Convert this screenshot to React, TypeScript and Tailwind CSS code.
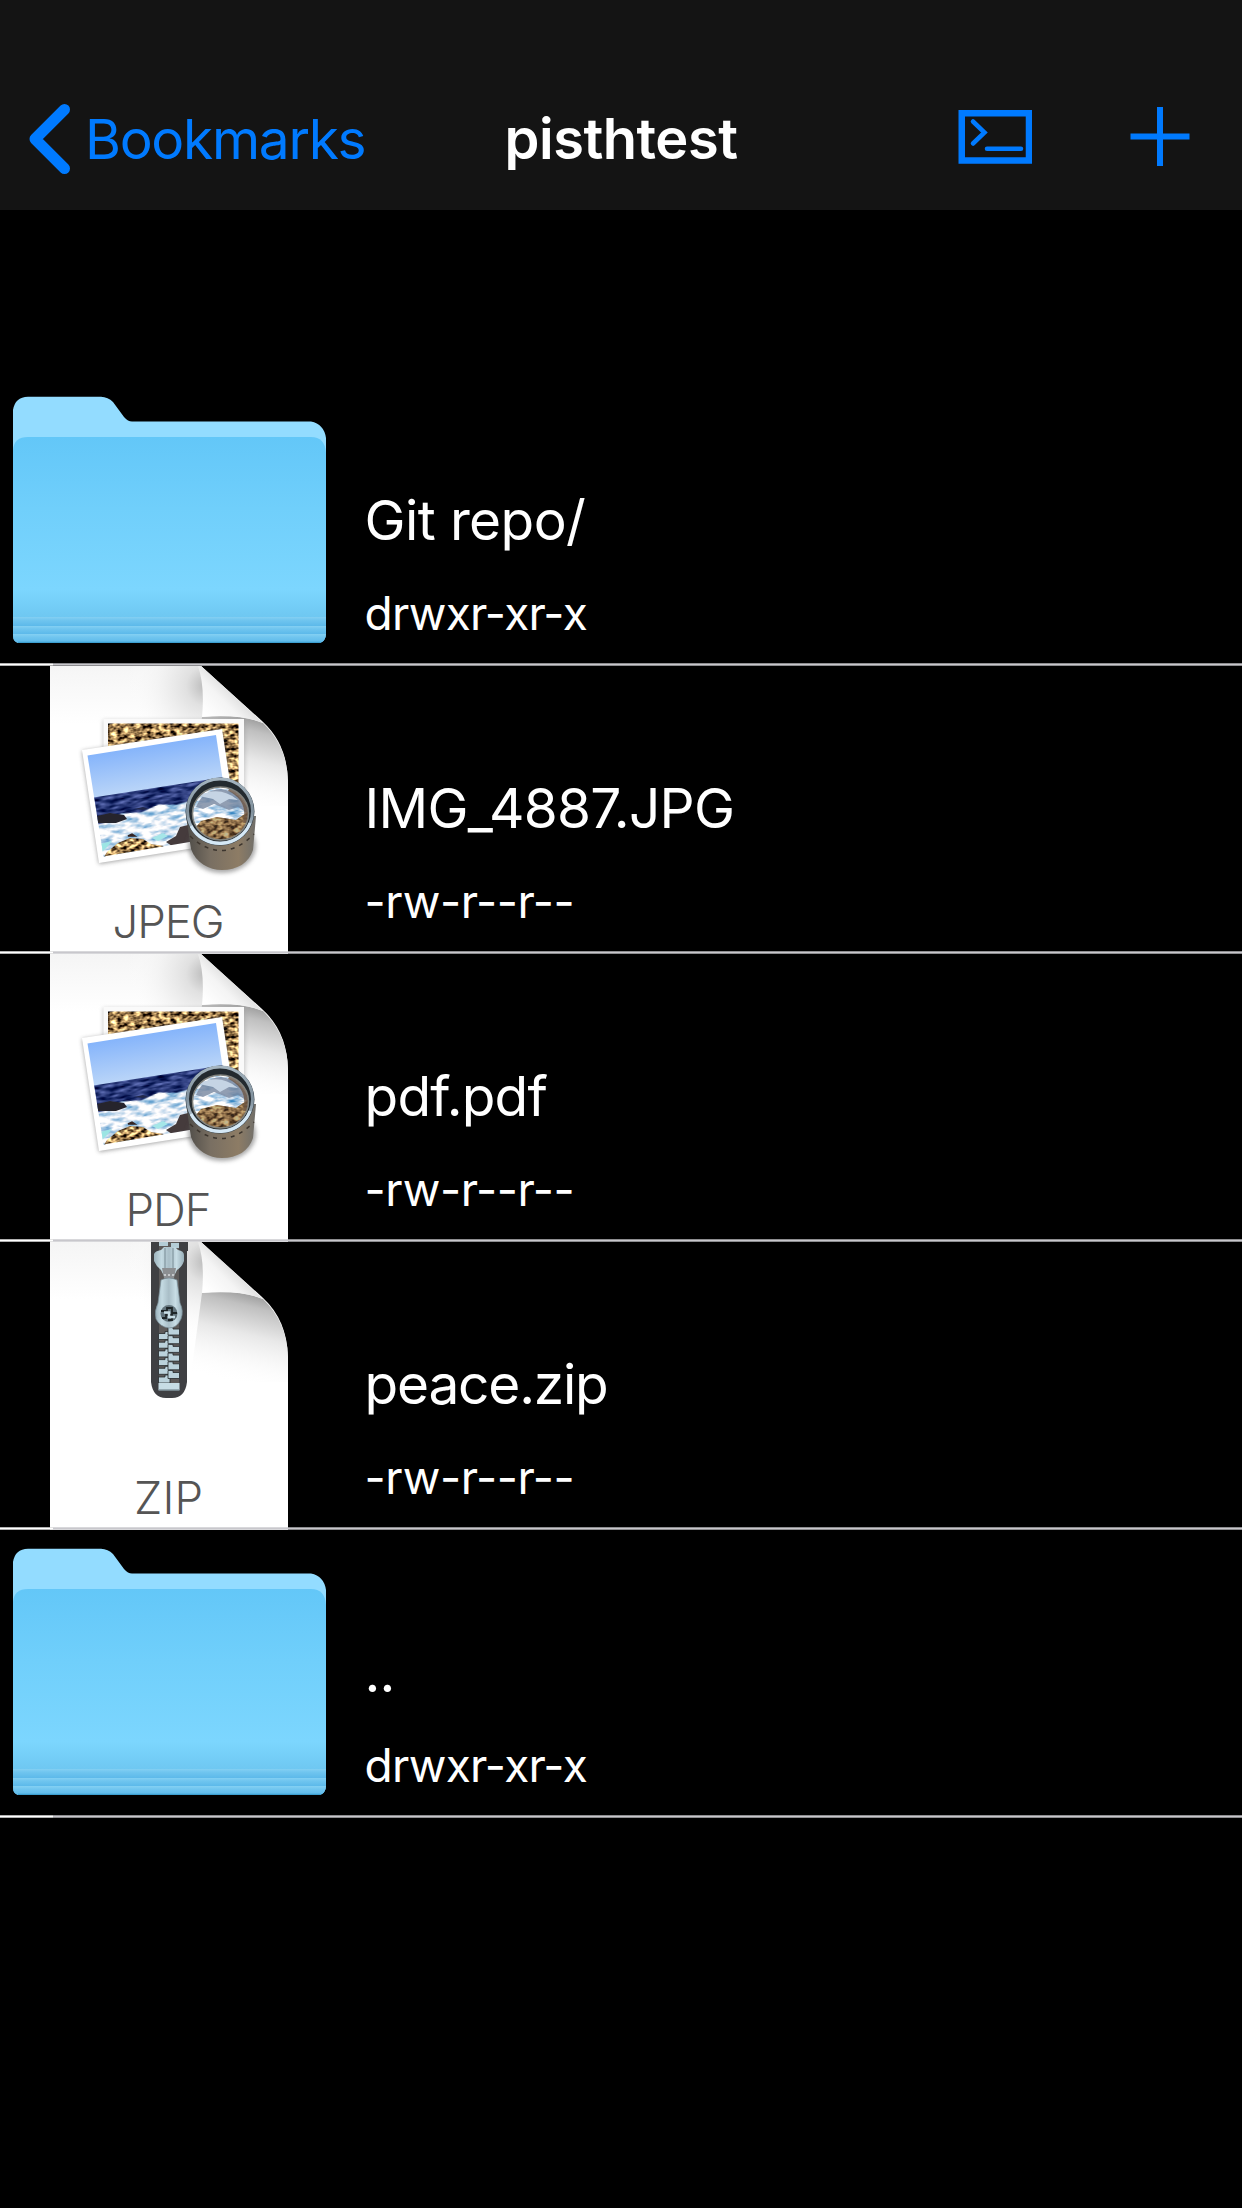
import React from "react";

type Kind = "folder" | "JPEG" | "PDF" | "ZIP";

const entries: { name: string; mode: string; kind: Kind; nameClass: string; modeClass: string }[] = [
  { name: "Git repo/", mode: "drwxr-xr-x", kind: "folder", nameClass: "tracking-[-0.6px]", modeClass: "tracking-[-0.75px]" },
  { name: "IMG_4887.JPG", mode: "-rw-r--r--", kind: "JPEG", nameClass: "tracking-[-0.75px]", modeClass: "tracking-[-0.35px]" },
  { name: "pdf.pdf", mode: "-rw-r--r--", kind: "PDF", nameClass: "tracking-[-0.8px]", modeClass: "tracking-[-0.35px]" },
  { name: "peace.zip", mode: "-rw-r--r--", kind: "ZIP", nameClass: "tracking-[-1.2px]", modeClass: "tracking-[-0.35px]" },
  { name: "..", mode: "drwxr-xr-x", kind: "folder", nameClass: "tracking-[-0.8px]", modeClass: "tracking-[-0.75px]" },
];

function Defs() {
  return (
    <svg width="0" height="0" className="absolute">
      <defs>
        <linearGradient id="front" x1="0" y1="0" x2="0" y2="1">
          <stop offset="0" stopColor="#63c7f8" />
          <stop offset=".35" stopColor="#70cffb" />
          <stop offset=".74" stopColor="#7cd6fe" />
          <stop offset=".87" stopColor="#6fc8f2" />
          <stop offset="1" stopColor="#60bdee" />
        </linearGradient>
        <linearGradient id="strip" x1="0" y1="0" x2="0" y2="1">
          <stop offset="0" stopColor="#84d0f3" />
          <stop offset=".35" stopColor="#70c5ef" />
          <stop offset="1" stopColor="#5cb9ea" />
        </linearGradient>
        <linearGradient id="pageTop" x1="0" y1="0" x2="0" y2="1">
          <stop offset="0" stopColor="#f5f5f5" />
          <stop offset=".2" stopColor="#fff" />
        </linearGradient>
        <radialGradient id="pageShade" gradientUnits="userSpaceOnUse" cx="206" cy="20" r="80">
          <stop offset="0" stopColor="#b8b8b8" />
          <stop offset=".25" stopColor="#dedede" stopOpacity=".9" />
          <stop offset=".6" stopColor="#f2f2f2" stopOpacity=".7" />
          <stop offset="1" stopColor="#fff" stopOpacity="0" />
        </radialGradient>
        <linearGradient id="underCurl" gradientUnits="userSpaceOnUse" x1="250" y1="50" x2="228" y2="140">
          <stop offset="0" stopColor="#999" />
          <stop offset=".15" stopColor="#c0c0c0" />
          <stop offset=".45" stopColor="#e8e8e8" />
          <stop offset="1" stopColor="#fff" stopOpacity="0" />
        </linearGradient>
        <linearGradient id="curl" gradientUnits="userSpaceOnUse" x1="206" y1="48" x2="234" y2="20">
          <stop offset="0" stopColor="#fff" />
          <stop offset=".55" stopColor="#f4f4f4" />
          <stop offset="1" stopColor="#d8d8d8" />
        </linearGradient>
        <linearGradient id="sky" x1="0" y1="0" x2="0" y2="1">
          <stop offset="0" stopColor="#80b1fb" />
          <stop offset="1" stopColor="#bdd7f8" />
        </linearGradient>
        <linearGradient id="barrel" x1="0" y1="0" x2="1" y2="0">
          <stop offset="0" stopColor="#4d4b47" />
          <stop offset=".35" stopColor="#796f62" />
          <stop offset=".75" stopColor="#8d7c65" />
          <stop offset="1" stopColor="#6f6e6a" />
        </linearGradient>
        <linearGradient id="ring" x1="0" y1="0" x2="0" y2="1">
          <stop offset="0" stopColor="#a5b5c0" />
          <stop offset=".5" stopColor="#7f8f9b" />
          <stop offset="1" stopColor="#cfe0ec" />
        </linearGradient>
        <linearGradient id="steel" x1="0" y1="0" x2="1" y2="0">
          <stop offset="0" stopColor="#9db4be" />
          <stop offset=".25" stopColor="#c4dae2" />
          <stop offset=".5" stopColor="#a9bec7" />
          <stop offset=".75" stopColor="#c8dde5" />
          <stop offset="1" stopColor="#98afb9" />
        </linearGradient>
        <filter id="gravel" x="0" y="0" width="1" height="1" colorInterpolationFilters="sRGB">
          <feTurbulence type="fractalNoise" baseFrequency=".17 .27" numOctaves="2" seed="4" />
          <feColorMatrix values="2.5 0 0 0 -.62  2.2 0 0 0 -.6  1.6 0 0 0 -.48  0 0 0 0 1" />
          <feComposite in2="SourceGraphic" operator="in" />
        </filter>
        <filter id="foam" x="0" y="0" width="1" height="1" colorInterpolationFilters="sRGB">
          <feTurbulence type="fractalNoise" baseFrequency=".07 .2" numOctaves="3" seed="9" />
          <feColorMatrix values="1.7 0 0 0 0  1 0 0 0 .4  .5 0 0 0 .7  0 0 0 0 1" />
          <feComposite in2="SourceGraphic" operator="in" />
        </filter>
        <filter id="sea" x="0" y="0" width="1" height="1" colorInterpolationFilters="sRGB">
          <feTurbulence type="fractalNoise" baseFrequency=".08 .3" numOctaves="2" seed="2" />
          <feColorMatrix values=".8 0 0 0 -.24  .8 0 0 0 -.18  .9 0 0 0 .02  0 0 0 0 1" />
          <feComposite in2="SourceGraphic" operator="in" />
        </filter>
        <filter id="soft" x="-.3" y="-.3" width="1.6" height="1.6">
          <feGaussianBlur stdDeviation="2" />
        </filter>
      </defs>
    </svg>
  );
}

function Folder() {
  return (
    <svg width="340" height="288" viewBox="0 0 340 288" className="block">
      <path d="M13 32Q15 19 28 18.700H101Q108 19 113 24L124 39Q128 43.500 132 43.500H311Q324 46 326 60V254Q326 265 318 265H20Q13 265 13 257Z" fill="#93dcff" />
      <path d="M13 72Q14 59 28 59H311Q325 59 326 75V254Q326 265 318 265H20Q13 265 13 257Z" fill="url(#front)" />
      <rect x="13" y="239" width="313" height="9" fill="url(#strip)" />
      <rect x="13" y="248" width="313" height="8" fill="url(#strip)" />
      <path d="M13 256H326Q325 265 318 265H20Q14 265 13 256Z" fill="url(#strip)" />
      <path d="M18 264.400H321" stroke="#3d9fd0" strokeWidth="1.200" />
    </svg>
  );
}

function Photos() {
  return (
    <g>
      <rect x="103" y="54" width="142" height="95" fill="#999" opacity=".5" filter="url(#soft)" />
      <rect x="103.500" y="53" width="140.500" height="92" fill="#fafafa" />
      <rect x="108" y="57.500" width="130.500" height="84" fill="#000" filter="url(#gravel)" />
      <path d="M82 85L222 64L238 176L99 198Z" fill="#666" opacity=".6" filter="url(#soft)" />
      <path d="M82 84L222 63L239 175L99 197Z" fill="#fff" />
      <clipPath id="shot">
        <path d="M87.500 89.500L216 69L231 169L103.500 190.500Z" />
      </clipPath>
      <g clipPath="url(#shot)">
        <g transform="rotate(-8.900 87 89)">
          <rect x="80" y="85" width="150" height="50" fill="url(#sky)" />
          <rect x="80" y="145" width="150" height="53" fill="#000" filter="url(#foam)" />
          <path d="M80 132H230V150L205 153L190 149L168 152L150 149L132 154L112 152L100 158L80 160Z" fill="#000" filter="url(#sea)" />
        </g>
        <path d="M97 150L110 147L124 149L127 153L116 157L98 157Z" fill="#26242c" />
        <path d="M134 143L143 141L149 143L143 144Z" fill="#22284a" />
        <path d="M102 194L107 186L118 177L130 172L143 173L151 178L164 180L150 190L110 200Z" fill="#000" filter="url(#gravel)" />
        <path d="M166 176L176 170L180 161L192 158V182L172 180Z" fill="#453b3c" />
        <path d="M128 170L132 168L135 170Z" fill="#352422" stroke="#352422" strokeWidth="1.500" />
        <path d="M100 178L112 175L107 181L102 186Z" fill="#9ce5e4" />
        <path d="M152 172L163 167L168 170L158 175Z" fill="#a5e6e8" />
      </g>
      <ellipse cx="222" cy="180" rx="34" ry="27" fill="#555" opacity=".5" filter="url(#soft)" />
      <path d="M186 150L191 183C196 197 209 204 222 204C237 204 249 197 253 184L256 150Z" fill="url(#barrel)" />
      <path d="M190 170Q222 200 254 168" fill="none" stroke="#3c352e" strokeWidth="1.500" strokeDasharray="4 5" />
      <ellipse cx="220" cy="145.500" rx="34.500" ry="34" fill="#34404a" />
      <ellipse cx="220" cy="145" rx="32.500" ry="32" fill="#232a2f" stroke="url(#ring)" strokeWidth="3" />
      <path d="M191 160A32 31 0 0 0 250 157" fill="none" stroke="#d5e8f5" strokeWidth="3" />
      <clipPath id="glass">
        <ellipse cx="220.500" cy="147.500" rx="28" ry="26.500" />
      </clipPath>
      <g clipPath="url(#glass)">
        <rect x="190" y="118" width="62" height="60" fill="#000" filter="url(#foam)" />
        <path d="M196 141Q203 124 221 123Q243 126 250 149L238 141L229 144L214 138L203 143Z" fill="#75869f" opacity=".8" />
        <path d="M199 130Q219 119 238 134L229 133L220 138L213 133Z" fill="#c5d4e4" />
        <path d="M192 166L201 155L217 151L236 154L249 145V178H196Z" fill="#000" filter="url(#gravel)" />
        <path d="M192 166L201 155L217 151L236 154L249 145V178H196Z" fill="#76583d" opacity=".45" />
        <path d="M229 123Q251 134 245 157" fill="none" stroke="#6c5544" strokeWidth="4" opacity=".8" />
      </g>
      <ellipse cx="220.500" cy="147.500" rx="28" ry="26.500" fill="none" stroke="#81827d" strokeWidth="1.500" />
    </g>
  );
}

const teeth = [0, 1, 2, 3, 4, 5];

function Zipper() {
  return (
    <g>
      <path d="M151 0H188V9H187V140Q185 156 172 156H166Q153 156 151 140Z" fill="#3f4043" />
      <rect x="159" y="0" width="20" height="142" fill="#5d5a59" />
      <path d="M159 0H168V4H159ZM171 1H179V6H171Z" fill="#b5cdd6" />
      {teeth.map((i) => (
        <g key={i} transform={`translate(0 ${i * 8.7})`}>
          <path d="M158.500 91.500H165V89.500H170V97.500H158.500Z" fill="#bbd2db" stroke="#24282b" strokeWidth=".8" />
          <path d="M179.500 87H173V85H168V93H179.500Z" fill="#bbd2db" stroke="#24282b" strokeWidth=".8" />
        </g>
      ))}
      <rect x="158.500" y="141" width="21" height="7" fill="#c7dde5" />
      <path d="M158.500 148H179.500" stroke="#8699a1" strokeWidth="1.500" />
      <path d="M154 12Q155 9 161 8L164 5H175L178 8Q184 9 184 13V19Q182 25 177 28L174 34H164L161 28Q156 24 154 19Z" fill="url(#steel)" />
      <path d="M165 6V27M173 6V27" stroke="#8397a0" strokeWidth="1.200" />
      <path d="M162 26H176L174 36H164Z" fill="#8c8f92" />
      <path d="M164 33H174" stroke="#d9dde0" strokeWidth="1.500" strokeDasharray="2 2" />
      <path d="M161 38Q169 34 177 38L180 61Q184 69 181 77Q177 86 169 86Q160 85 156 77Q154 69 158 61Z" fill="url(#steel)" stroke="#798d96" strokeWidth=".7" />
      <circle cx="169" cy="71.500" r="8.500" fill="#62737b" />
      <path d="M161 69H167V66H172V71H177M162 76H166V73H172V78H168" fill="none" stroke="#1e2527" strokeWidth="1.800" />
      <path d="M164 70.500H169V75H175" fill="none" stroke="#c6dce4" strokeWidth="2.500" />
    </g>
  );
}

function Document({ kind }: { kind: "JPEG" | "PDF" | "ZIP" }) {
  const widths = { JPEG: 112, PDF: 86, ZIP: 69 };
  const outline = "M50 0H201L263 56Q287 78 288 115V288H50Z";
  return (
    <svg width="340" height="288" viewBox="0 0 340 288" className="block">
      <path d={outline} fill="url(#pageTop)" />
      <path d={outline} fill="url(#pageShade)" />
      <path d="M202 51Q238 47 263 57Q287 80 288 115V140H190Z" fill="url(#underCurl)" />
      {kind === "ZIP" ? <Zipper /> : <Photos />}
      <path d="M198 0Q205 20 202 51Q242 48 263 57L201 0Z" fill="url(#curl)" />
      <text
        x="168.500"
        y="272"
        textAnchor="middle"
        textLength={widths[kind]}
        fontFamily="Inter, sans-serif"
        fontWeight="350"
        fontSize="45.500"
        fill="#555"
      >
        {kind}
      </text>
    </svg>
  );
}

export default function App() {
  return (
    <div className="flex h-[2208px] w-[1242px] flex-col overflow-hidden bg-black font-['Inter',sans-serif] text-white">
      <Defs />
      <header className="grid h-[210px] grid-cols-[480px_282px_480px] bg-[#141414] pt-[80px]">
        <div className="flex items-start pl-[28px] text-[#007aff]">
          <svg width="44" height="118" viewBox="0 0 44 118">
            <path d="M36.500 29.500L7 59L36.500 88.500" fill="none" stroke="currentColor" strokeWidth="11" strokeLinecap="round" strokeLinejoin="round" />
          </svg>
          <span className="ml-[13px] mt-[19px] text-[55px] leading-[80px] tracking-[-1.3px]">Bookmarks</span>
        </div>
        <h1 className="mt-[19px] text-center text-[56px] font-semibold leading-[80px] tracking-[-0.5px]">pisthtest</h1>
        <div className="flex items-start justify-end pr-[52px] text-[#007aff]">
          <svg width="74" height="118" viewBox="0 0 74 118" fill="none" stroke="currentColor" className="ml-px">
            <path d="M3.750 33.250H71V80.500H3.750Z" strokeWidth="6.500" />
            <path d="M15 41.500L26.500 52.500L15 63.500" strokeWidth="4.500" strokeLinecap="round" />
            <path d="M29 68.700H63" strokeWidth="4.500" strokeLinecap="round" />
          </svg>
          <svg width="60" height="118" viewBox="0 0 60 118" className="ml-[98px]">
            <path d="M.5 56.500H59.500M30 27V86" fill="none" stroke="currentColor" strokeWidth="6" />
          </svg>
        </div>
      </header>
      <main className="mt-[168px]">
        {entries.map((e) => (
          <div key={e.name} className="relative flex h-[288px]">
            {e.kind === "folder" ? <Folder /> : <Document kind={e.kind} />}
            <div className="flex flex-col whitespace-nowrap pl-[24.5px] pt-[102px]">
              <span className={`text-[55px] leading-[80px] ${e.nameClass}`}>{e.name}</span>
              <span className={`mt-[22.5px] text-[46px] leading-[60px] ${e.modeClass}`}>{e.mode}</span>
            </div>
            <div className="absolute inset-x-0 bottom-0 flex h-[3px]">
              <div className="w-[53px] border-y border-[#dddddd]/80 bg-white bg-clip-padding" />
              <div className="flex-1 border-y border-[#c8c7cc]/70 bg-[#c8c7cc] bg-clip-padding" />
            </div>
          </div>
        ))}
      </main>
    </div>
  );
}
